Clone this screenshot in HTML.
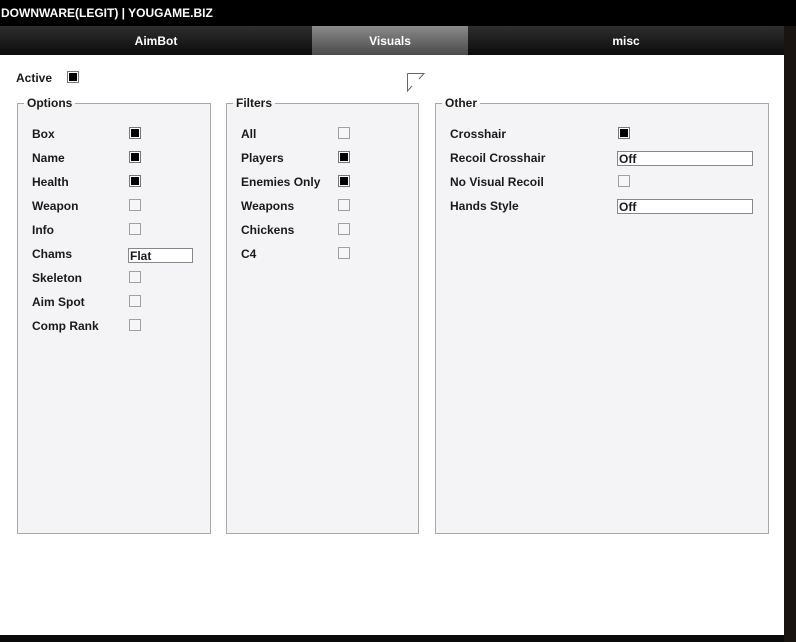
<!DOCTYPE html>
<html><head><meta charset="utf-8"><style>
*{margin:0;padding:0;box-sizing:border-box}
body{width:796px;height:642px;background:#0a0a0a;position:relative;overflow:hidden;font-family:Tahoma,"Liberation Sans","DejaVu Sans",sans-serif;font-size:12px;color:#1a1a1a}
.a{position:absolute}
#title{left:0;top:0;width:796px;height:26px;background:#000;color:#fff;font-weight:bold;font-size:12px;line-height:26px;padding-left:1px}
.tab{top:26px;height:29px;color:#fff;font-weight:bold;text-align:center;line-height:31px;background:linear-gradient(#2e2e2e,#0c0c0c)}
#main{left:0;top:55px;width:784px;height:580px;background:#fff}
.box{background:#f4f3f5;border:1px solid #a8a8a8;top:103px;height:431px}
.leg{top:-8px;left:6px;padding:0 3px;font-weight:bold;line-height:14px;background:linear-gradient(#fff 50%,#f4f3f5 50%)}
.lbl{font-weight:bold;line-height:14px}
.cb{width:12px;height:12px;border:1px solid #a0a0a0;background:#f6f6f6}
.cb.on{border:1px solid #777;background:#000;box-shadow:inset 0 0 0 1px #fff}
.in{height:15px;border:1px solid #888;background:#fff;font-weight:bold;line-height:14px;padding-left:1px}
</style></head><body>
<div id="title" class="a">DOWNWARE(LEGIT) | YOUGAME.BIZ</div>
<div class="a tab" style="left:0;width:312px">AimBot</div>
<div class="a tab" style="left:312px;width:156px;background:linear-gradient(#8a8a8a,#4a4a4a)">Visuals</div>
<div class="a tab" style="left:468px;width:316px">misc</div>
<div id="main" class="a"></div>
<div class="a" style="left:784px;top:26px;width:12px;height:616px;background:#1a1410"></div>
<div class="a lbl" style="left:16px;top:71px">Active</div>
<div class="a cb on" style="left:67px;top:71px"></div>
<svg class="a" style="left:406px;top:72px" width="20" height="20"><path d="M1.5 1.5 H18 L13 7 M1.5 1.5 V19 L6 14" fill="none" stroke="#666" stroke-width="1"/></svg>

<div class="a box" style="left:17px;width:194px"><div class="a leg">Options</div></div>
<div class="a box" style="left:226px;width:193px"><div class="a leg">Filters</div></div>
<div class="a box" style="left:435px;width:334px"><div class="a leg">Other</div></div>

<div class="a lbl" style="left:32px;top:127px">Box</div><div class="a cb on" style="left:129px;top:127px"></div>
<div class="a lbl" style="left:32px;top:151px">Name</div><div class="a cb on" style="left:129px;top:151px"></div>
<div class="a lbl" style="left:32px;top:175px">Health</div><div class="a cb on" style="left:129px;top:175px"></div>
<div class="a lbl" style="left:32px;top:199px">Weapon</div><div class="a cb" style="left:129px;top:199px"></div>
<div class="a lbl" style="left:32px;top:223px">Info</div><div class="a cb" style="left:129px;top:223px"></div>
<div class="a lbl" style="left:32px;top:247px">Chams</div><div class="a in" style="left:128px;top:248px;width:65px">Flat</div>
<div class="a lbl" style="left:32px;top:271px">Skeleton</div><div class="a cb" style="left:129px;top:271px"></div>
<div class="a lbl" style="left:32px;top:295px">Aim Spot</div><div class="a cb" style="left:129px;top:295px"></div>
<div class="a lbl" style="left:32px;top:319px">Comp Rank</div><div class="a cb" style="left:129px;top:319px"></div>

<div class="a lbl" style="left:241px;top:127px">All</div><div class="a cb" style="left:338px;top:127px"></div>
<div class="a lbl" style="left:241px;top:151px">Players</div><div class="a cb on" style="left:338px;top:151px"></div>
<div class="a lbl" style="left:241px;top:175px">Enemies Only</div><div class="a cb on" style="left:338px;top:175px"></div>
<div class="a lbl" style="left:241px;top:199px">Weapons</div><div class="a cb" style="left:338px;top:199px"></div>
<div class="a lbl" style="left:241px;top:223px">Chickens</div><div class="a cb" style="left:338px;top:223px"></div>
<div class="a lbl" style="left:241px;top:247px">C4</div><div class="a cb" style="left:338px;top:247px"></div>

<div class="a lbl" style="left:450px;top:127px">Crosshair</div><div class="a cb on" style="left:618px;top:127px"></div>
<div class="a lbl" style="left:450px;top:151px">Recoil Crosshair</div><div class="a in" style="left:617px;top:151px;width:136px">Off</div>
<div class="a lbl" style="left:450px;top:175px">No Visual Recoil</div><div class="a cb" style="left:618px;top:175px"></div>
<div class="a lbl" style="left:450px;top:199px">Hands Style</div><div class="a in" style="left:617px;top:199px;width:136px">Off</div>
</body></html>
